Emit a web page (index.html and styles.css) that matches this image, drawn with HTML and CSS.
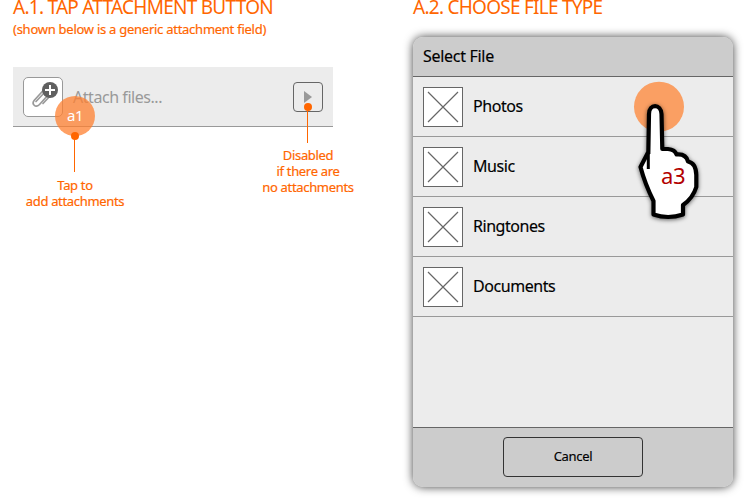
FILE: index.html
```html
<!DOCTYPE html>
<html lang="en">
<head>
<meta charset="utf-8">
<title>Attachment flow</title>
<link rel="stylesheet" href="styles.css">
</head>
<body>
<main class="board">
  <section class="step step-tap">
    <h2 class="title">A.1. TAP ATTACHMENT BUTTON</h2>
    <p class="subtitle">(shown below is a generic attachment field)</p>
    <div class="field">
      <div class="attach">
        <svg class="clip" width="38" height="38" viewBox="24 78 38 38">
          <path d="M36 101.500L45.500 91.500C48 89 51 92 48.500 94.500L39.500 104.500C35.500 108.500 31 104 34.500 100L45.500 88C50.500 83.500 56 89 51.500 94.500L43 103.500" fill="none" stroke="#999" stroke-width="1.7" stroke-linecap="round" stroke-linejoin="round"/>
          <circle cx="50" cy="90" r="8" fill="#606060"/>
          <path d="M50 85v10M45 90h10" stroke="#fff" stroke-width="2"/>
        </svg>
      </div>
      <span class="placeholder">Attach files...</span>
      <div class="next">
        <svg width="8" height="12" viewBox="0 0 8 12"><path d="M0 0L8 6L0 12Z" fill="#999"/></svg>
      </div>
      <span class="touch-tag">a1</span>
      <span class="pin pin-tap"></span>
      <span class="pin pin-next"></span>
    </div>
    <div class="notes">
      <p class="note note-tap">Tap to<br>add attachments</p>
      <p class="note note-next">Disabled<br>if there are<br>no attachments</p>
    </div>
  </section>
  <section class="step step-choose">
    <h2 class="title">A.2. CHOOSE FILE TYPE</h2>
    <div class="dialog">
      <header class="dialog-head">Select File</header>
      <ul class="types">
        <li class="type"><svg class="thumb" width="40" height="40" viewBox="1 1 38 38"><path d="M5 5L35 35M35 5L5 35"/></svg><span class="type-name">Photos</span></li>
        <li class="type"><svg class="thumb" width="40" height="40" viewBox="1 1 38 38"><path d="M5 5L35 35M35 5L5 35"/></svg><span class="type-name">Music</span></li>
        <li class="type"><svg class="thumb" width="40" height="40" viewBox="1 1 38 38"><path d="M5 5L35 35M35 5L5 35"/></svg><span class="type-name">Ringtones</span></li>
        <li class="type"><svg class="thumb" width="40" height="40" viewBox="1 1 38 38"><path d="M5 5L35 35M35 5L5 35"/></svg><span class="type-name">Documents</span></li>
      </ul>
      <footer class="dialog-foot"><button class="cancel">Cancel</button></footer>
      <div class="pointer">
        <svg width="90" height="155" viewBox="625 75 90 155">
          <circle cx="659" cy="106.700" r="25" fill="#fa9f63"/>
          <g class="hand">
            <path d="M648.300 154L649 114C649 103.500 661 103.500 661.500 114L662.300 149H668Q675 149.500 676.500 154.500Q686 153.500 688 161.500Q696 163 696.300 175V187Q693 198 683 205V214.500Q668 219.500 653.500 214.500V201Q645 184 640.500 167L648.300 152"/>
            <path class="thumb-line" d="M648.300 152V169"/>
          </g>
        </svg>
        <span class="pointer-label">a3</span>
      </div>
    </div>
  </section>
</main>
</body>
</html>
```
FILE: styles.css
```css
* { box-sizing: border-box; }
body {
  margin: 0;
  width: 746px;
  height: 500px;
  overflow: hidden;
  background: #fff;
  font-family: "Noto Sans", sans-serif;
  font-size: 16px;
  letter-spacing: -.45px;
  color: #000;
}
h2, p, ul { margin: 0; padding: 0; font-weight: 400; }
.board { display: flex; gap: 80px; padding-left: 13px; }
.step { width: 320px; }
.title { font-size: 19px; line-height: 22px; height: 18px; margin-top: -4px; color: #f60; white-space: nowrap; letter-spacing: -.74px; }
.subtitle { font-size: 13px; line-height: 18px; margin-top: 6px; color: #f60; white-space: nowrap; letter-spacing: -.26px; -webkit-text-stroke: .2px #f60; }
.field {
  position: relative;
  display: flex;
  align-items: center;
  height: 60px;
  margin-top: 29px;
  padding: 0 10px;
  background: #ececec;
  border-bottom: 1px solid #999;
}
.attach { width: 40px; height: 40px; border: 1px solid #999; border-radius: 5px; background: #fff; }
.clip { display: block; }
.placeholder { margin-left: 10px; color: #999; white-space: nowrap; }
.next {
  display: flex;
  align-items: center;
  justify-content: center;
  width: 30px;
  height: 30px;
  margin-left: auto;
  border: 1px solid #666;
  border-radius: 4px;
}
.touch-tag {
  position: absolute;
  left: 42px;
  top: 29px;
  width: 40px;
  height: 40px;
  border-radius: 50%;
  background: rgba(255, 128, 48, .75);
  color: #fff;
  font-size: 15px;
  line-height: 38px;
  text-align: center;
}
.pin { position: absolute; width: 8px; height: 8px; border-radius: 50%; background: #f60; }
.pin::after { content: ""; position: absolute; left: 3px; top: 4px; width: 1px; height: 36px; background: #f60; }
.pin-tap { left: 58px; top: 65px; }
.pin-next { left: 291px; top: 36px; }
.notes { display: flex; justify-content: space-between; align-items: flex-start; color: #f60; font-size: 13px; line-height: 16px; letter-spacing: -.33px; text-align: center; -webkit-text-stroke: .2px #f60; }
.note { white-space: nowrap; }
.note-tap { width: 124px; margin-top: 50px; }
.note-next { width: 92px; margin: 20px -21px 0 0; }
.dialog {
  position: relative;
  width: 320px;
  height: 450px;
  margin-top: 23px;
  display: flex;
  flex-direction: column;
  border-radius: 10px;
  background: #ececec;
  box-shadow: 0 0 10px rgba(0, 0, 0, .75);
}
.dialog-head { height: 40px; padding-left: 10px; line-height: 38px; letter-spacing: -.3px; background: #ccc; border-bottom: 1px solid #666; border-radius: 10px 10px 0 0; -webkit-text-stroke: .15px #000; }
.types { flex: 1; list-style: none; }
.type { display: flex; align-items: center; gap: 10px; height: 60px; padding-left: 10px; border-bottom: 1px solid #999; }
.type-name { padding-bottom: 2px; -webkit-text-stroke: .15px #000; }
.thumb { display: block; background: #fff; border: 1px solid #666; }
.thumb path { stroke: #666; stroke-width: 1.2; }
.dialog-foot { display: flex; align-items: center; justify-content: center; height: 60px; padding-bottom: 1px; background: #ccc; border-top: 1px solid #666; border-radius: 0 0 10px 10px; }
.cancel { width: 140px; height: 40px; padding: 0 0 2px; border: 1px solid #333; border-radius: 4px; background: transparent; font: 13px "Noto Sans", sans-serif; letter-spacing: -.3px; color: #000; -webkit-text-stroke: .15px #000; }
.pointer { position: absolute; left: 212px; top: 38px; width: 90px; height: 155px; }
.pointer svg { display: block; }
.hand { fill: #fff; stroke: #000; stroke-width: 4.2; stroke-linejoin: round; filter: drop-shadow(0 1px 2px rgba(0, 0, 0, .6)); }
.thumb-line { stroke-width: 3; }
.pointer-label { position: absolute; left: 36px; top: 85px; font-size: 22px; line-height: 30px; color: #b30000; }
```
